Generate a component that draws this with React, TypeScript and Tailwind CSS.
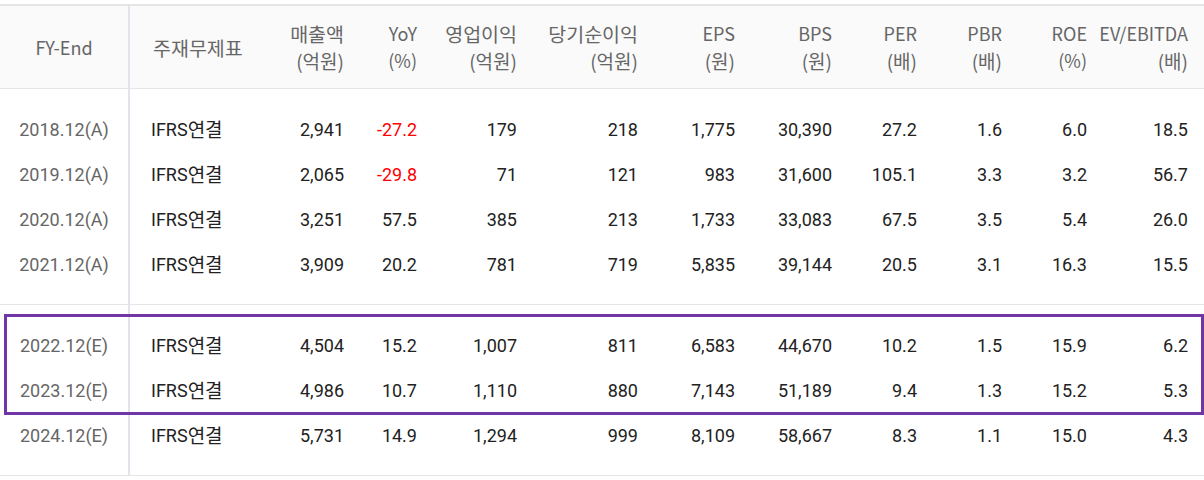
import React from 'react';

type Row = {
    fy: string;
    std: string;
    vals: string[];
};

const HEADERS: [string, string][] = [
    ['매출액', '(억원)'],
    ['YoY', '(%)'],
    ['영업이익', '(억원)'],
    ['당기순이익', '(억원)'],
    ['EPS', '(원)'],
    ['BPS', '(원)'],
    ['PER', '(배)'],
    ['PBR', '(배)'],
    ['ROE', '(%)'],
    ['EV/EBITDA', '(배)'],
];

const ACTUAL: Row[] = [
    { fy: '2018.12(A)', std: 'IFRS연결', vals: ['2,941', '-27.2', '179', '218', '1,775', '30,390', '27.2', '1.6', '6.0', '18.5'] },
    { fy: '2019.12(A)', std: 'IFRS연결', vals: ['2,065', '-29.8', '71', '121', '983', '31,600', '105.1', '3.3', '3.2', '56.7'] },
    { fy: '2020.12(A)', std: 'IFRS연결', vals: ['3,251', '57.5', '385', '213', '1,733', '33,083', '67.5', '3.5', '5.4', '26.0'] },
    { fy: '2021.12(A)', std: 'IFRS연결', vals: ['3,909', '20.2', '781', '719', '5,835', '39,144', '20.5', '3.1', '16.3', '15.5'] },
];

const ESTIMATE: Row[] = [
    { fy: '2022.12(E)', std: 'IFRS연결', vals: ['4,504', '15.2', '1,007', '811', '6,583', '44,670', '10.2', '1.5', '15.9', '6.2'] },
    { fy: '2023.12(E)', std: 'IFRS연결', vals: ['4,986', '10.7', '1,110', '880', '7,143', '51,189', '9.4', '1.3', '15.2', '5.3'] },
    { fy: '2024.12(E)', std: 'IFRS연결', vals: ['5,731', '14.9', '1,294', '999', '8,109', '58,667', '8.3', '1.1', '15.0', '4.3'] },
];

// 컬럼 폭 (첫 컬럼은 세로선 포함 130px)
const GRID = 'grid grid-cols-[130px_130px_84px_73px_100px_121px_97px_97px_85px_85px_85px_101px]';

// 한글이 들어간 헤더는 조금 크게
const hasHangul = (s: string) => /[가-힣]/.test(s);

const Spacer: React.FC<{ h: string }> = ({ h }) => (
    <div className={`flex ${h}`}>
        <div className="w-[130px] border-r-2 border-[#e3e3eb]" />
    </div>
);

const DataRow: React.FC<{ row: Row }> = ({ row }) => (
    <div className={`${GRID} h-[45px] text-[18px] font-['Roboto','Noto_Sans_CJK_KR',sans-serif]`}>
        <div className="flex items-center justify-center border-r-2 border-[#e3e3eb] text-[#666]">{row.fy}</div>
        <div className="flex items-center pl-[21px] text-[#222]">
            IFRS<span className="text-[19px] font-['Noto_Sans_CJK_KR',sans-serif]">연결</span>
        </div>
        {row.vals.map((v, i) => (
            <div
                key={i}
                className={`flex items-center justify-end ${v.startsWith('-') ? 'text-[#ff0000]' : 'text-[#222]'}`}
            >
                {v}
            </div>
        ))}
    </div>
);

const Group: React.FC<{ rows: Row[] }> = ({ rows }) => (
    <div className="border-b border-[#e5e5e5]">
        <Spacer h="h-[18px]" />
        {rows.map((r) => (
            <DataRow key={r.fy} row={r} />
        ))}
        <Spacer h="h-[17px]" />
    </div>
);

const App: React.FC = () => {
    return (
        <div className="relative w-[1204px] h-[480px] bg-white pt-[4px] overflow-hidden">
            {/* Header */}
            <div
                className={`${GRID} h-[85px] bg-[#fafafa] border-t-2 border-b border-[#e5e5e5] text-[18px] text-[#666] leading-[27px] font-['Noto_Sans_CJK_KR',sans-serif]`}
            >
                <div className="flex items-center justify-center border-r-2 border-[#e3e3eb]">FY-End</div>
                <div className="flex items-center pl-[23px] text-[19.5px]">주재무제표</div>
                {HEADERS.map(([a, b]) => (
                    <div key={a} className="flex flex-col items-end justify-center whitespace-nowrap">
                        <span className={hasHangul(a) ? 'text-[19.5px]' : 'text-[18px]'}>{a}</span>
                        <span className={hasHangul(b) ? 'text-[19px]' : 'text-[18px]'}>{b}</span>
                    </div>
                ))}
            </div>

            <Group rows={ACTUAL} />
            <Group rows={ESTIMATE} />

            {/* 강조 박스 */}
            <div className="absolute left-[4px] top-[314px] w-[1200px] h-[101px] border-[3px] border-[#7235a5]" />
        </div>
    );
};

export default App;
